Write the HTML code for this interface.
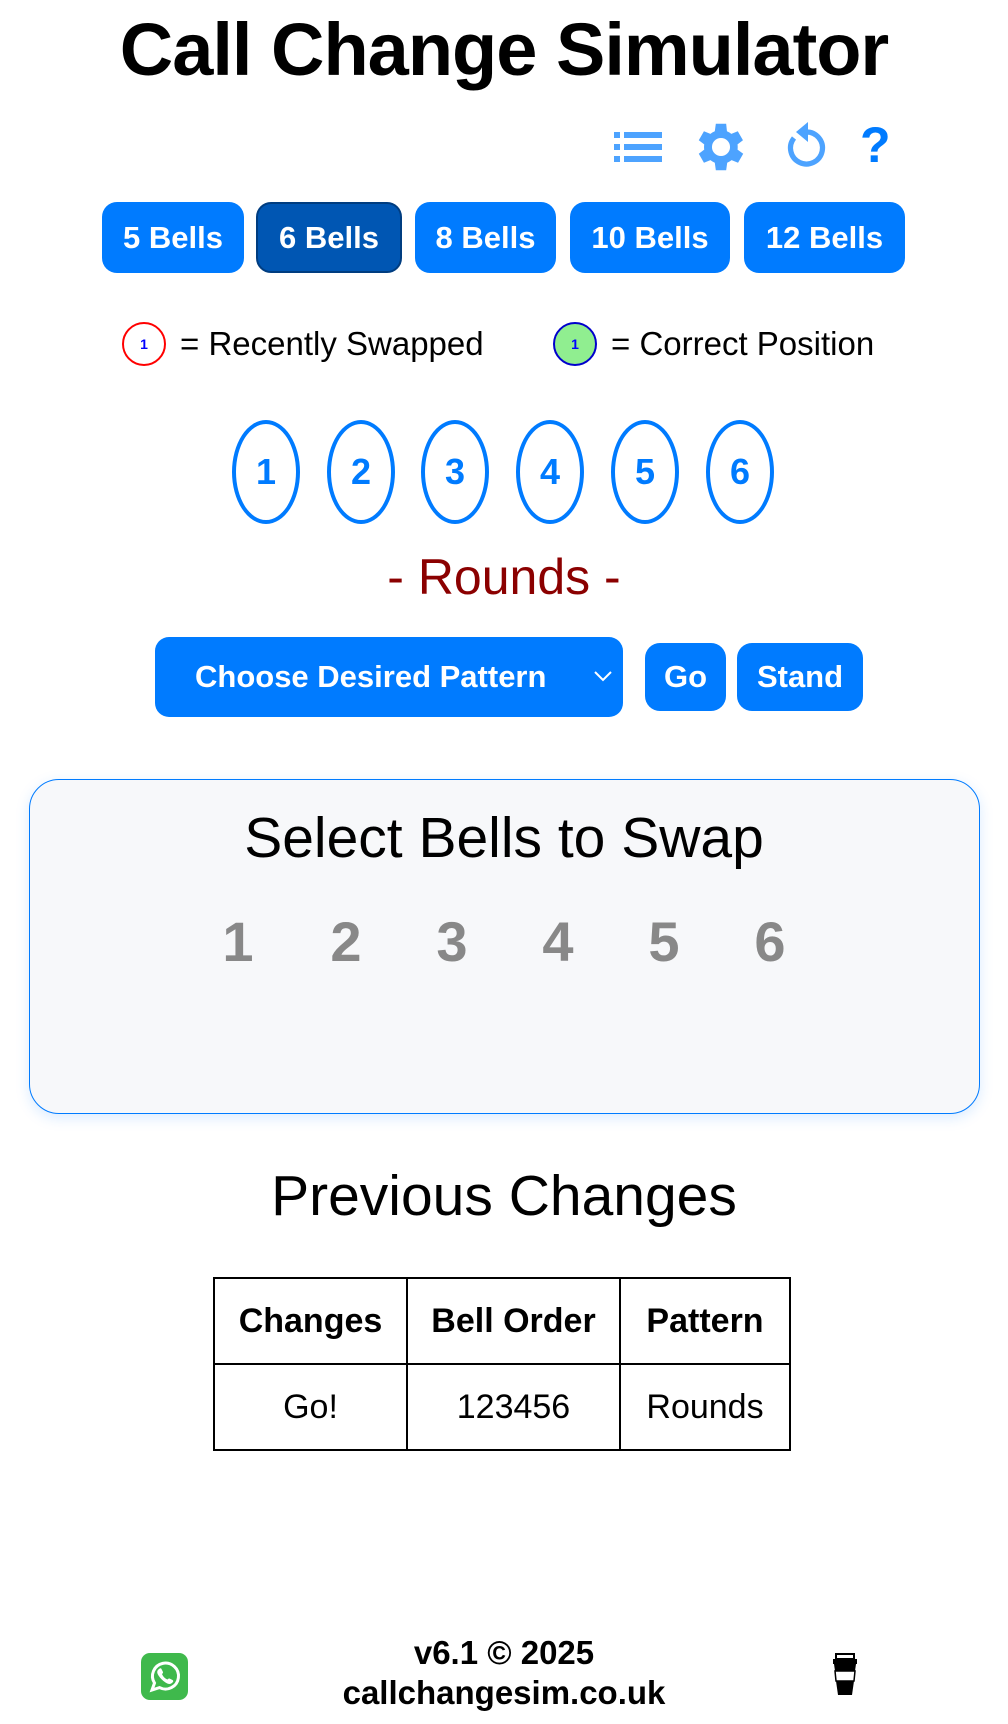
<!DOCTYPE html>
<html><head><meta charset="utf-8"><style>
*{box-sizing:border-box;margin:0;padding:0}
body{width:1008px;height:1724px;background:#fff;font-family:"Liberation Sans",Arial,sans-serif;position:relative;overflow:hidden;color:#000}
.a{position:absolute}
.c{text-align:center}
h1{position:absolute;left:0;width:1008px;top:7px;text-align:center;font-size:74px;font-weight:bold;letter-spacing:-1px}
.bb{position:absolute;top:202px;height:71px;background:#007bff;color:#fff;border-radius:15px;font-weight:bold;font-size:31px;line-height:71px;text-align:center}
.oval{position:absolute;top:420px;width:68px;height:104px;border:4px solid #007bff;border-radius:50%;color:#007bff;font-weight:bold;font-size:36px;line-height:96px;text-align:center}
.leg{position:absolute;top:322px;font-size:33px;line-height:44px}
.lc{position:absolute;top:322px;width:44px;height:44px;border-radius:50%;font-size:14px;font-weight:bold;color:#00f;text-align:center;line-height:40px}
.num{position:absolute;top:909px;font-size:56px;font-weight:bold;color:#888;width:60px;text-align:center}
table{position:absolute;left:213px;top:1277px;border-collapse:collapse}
td,th{border:2px solid #000;text-align:center;font-size:34px;height:86px}
</style></head><body>
<h1>Call Change Simulator</h1>
<svg class="a" style="left:614px;top:130px" width="48" height="34" viewBox="0 0 48 34" fill="#4da3ff"><rect x="0" y="2" width="6" height="6"/><rect x="10" y="2" width="38" height="6"/><rect x="0" y="14" width="6" height="6"/><rect x="10" y="14" width="38" height="6"/><rect x="0" y="26" width="6" height="6"/><rect x="10" y="26" width="38" height="6"/></svg>
<svg class="a" style="left:690px;top:116px" width="62" height="62" viewBox="0 0 24 24"><path fill="#4da3ff" d="M19.4 13a7.5 7.5 0 0 0 0-2l2.1-1.6-2-3.5-2.5 1a7.6 7.6 0 0 0-1.7-1L15 3h-4l-.4 2.9a7.6 7.6 0 0 0-1.7 1l-2.5-1-2 3.5L6.5 11a7.5 7.5 0 0 0 0 2l-2.1 1.6 2 3.5 2.5-1a7.6 7.6 0 0 0 1.7 1L11 21h4l.4-2.9a7.6 7.6 0 0 0 1.7-1l2.5 1 2-3.5zM13 15.5a3.5 3.5 0 1 1 0-7 3.5 3.5 0 0 1 0 7z" transform="translate(-1 0)"/></svg>
<svg class="a" style="left:780px;top:120px" width="48" height="52" viewBox="0 0 24 26"><path d="M7 9a8 8 0 1 0 6-3" fill="none" stroke="#4da3ff" stroke-width="2.6"/><path d="M14 1v10l-6-5z" fill="#4da3ff"/></svg>
<div class="a" style="left:860px;top:116px;font-size:50px;font-weight:bold;color:#007bff">?</div>
<div class="bb" style="left:102px;width:142px">5 Bells</div>
<div class="bb" style="left:256px;width:146px;background:#0056b3;border:2px solid #003d80;line-height:67px">6 Bells</div>
<div class="bb" style="left:415px;width:141px">8 Bells</div>
<div class="bb" style="left:570px;width:160px">10 Bells</div>
<div class="bb" style="left:744px;width:161px">12 Bells</div>
<div class="lc" style="left:122px;border:2px solid #f00">1</div>
<div class="leg" style="left:180px">= Recently Swapped</div>
<div class="lc" style="left:553px;border:2px solid #00c;background:#90ee90">1</div>
<div class="leg" style="left:611px">= Correct Position</div>
<div class="oval" style="left:232px">1</div>
<div class="oval" style="left:327px">2</div>
<div class="oval" style="left:421px">3</div>
<div class="oval" style="left:516px">4</div>
<div class="oval" style="left:611px">5</div>
<div class="oval" style="left:706px">6</div>
<div class="a c" style="left:0;width:1008px;top:548px;font-size:50px;color:#8b0000">- Rounds -</div>
<div class="a" style="left:155px;top:637px;width:468px;height:80px;background:#007bff;border-radius:14px;color:#fff;font-weight:bold;font-size:31px;line-height:80px;padding-left:40px">Choose Desired Pattern</div>
<svg class="a" style="left:593px;top:669px" width="20" height="14" viewBox="0 0 20 14"><path d="M2 3l8 8 8-8" fill="none" stroke="#fff" stroke-width="2"/></svg>
<div class="bb" style="left:645px;top:643px;width:81px;height:68px;line-height:68px">Go</div>
<div class="bb" style="left:737px;top:643px;width:126px;height:68px;line-height:68px">Stand</div>
<div class="a" style="left:29px;top:779px;width:951px;height:335px;border:1.5px solid #007bff;border-radius:30px;background:#f7f8fa;box-shadow:0 4px 14px rgba(0,123,255,0.15)"></div>
<div class="a c" style="left:0;width:1008px;top:805px;font-size:57px">Select Bells to Swap</div>
<div class="num" style="left:208px">1</div>
<div class="num" style="left:316px">2</div>
<div class="num" style="left:422px">3</div>
<div class="num" style="left:528px">4</div>
<div class="num" style="left:634px">5</div>
<div class="num" style="left:740px">6</div>
<div class="a c" style="left:0;width:1008px;top:1163px;font-size:57px">Previous Changes</div>
<table><tr><th style="width:193px">Changes</th><th style="width:213px">Bell Order</th><th style="width:170px">Pattern</th></tr>
<tr><td>Go!</td><td>123456</td><td>Rounds</td></tr></table>
<div class="a c" style="left:0;width:1008px;top:1633px;font-size:33px;font-weight:bold;line-height:40px">v6.1 © 2025<br>callchangesim.co.uk</div>
<svg class="a" style="left:141px;top:1653px" width="47" height="47" viewBox="0 0 47 47"><rect width="47" height="47" rx="9" fill="#3fb94c"/><path d="M11 37l2.5-7a13 13 0 1 1 5 4.6z" fill="none" stroke="#fff" stroke-width="3"/><path d="M18 16c1-1 2-1 2.5 0l1.5 3c.3 1-1 2-1 2 1 2.5 3 4.5 5.5 5.5 0 0 1-1.3 2-1l3 1.5c1 .5 1 1.5 0 2.5-2 2-4 2-7 0s-5-4-7-7-1.5-5 .5-6.5z" fill="#fff"/></svg>
<svg class="a" style="left:831px;top:1653px" width="28" height="44" viewBox="0 0 28 44"><rect x="5" y="1" width="18" height="5" fill="#fff" stroke="#000" stroke-width="2"/><rect x="2" y="6" width="24" height="5" fill="#000"/><path d="M3 11h22l-1 7H4z" fill="#000"/><path d="M4 18h20l-1 10H5z" fill="#fff" stroke="#000" stroke-width="1.5"/><path d="M5 28h18l-2 14H7z" fill="#000"/></svg>
</body></html>
